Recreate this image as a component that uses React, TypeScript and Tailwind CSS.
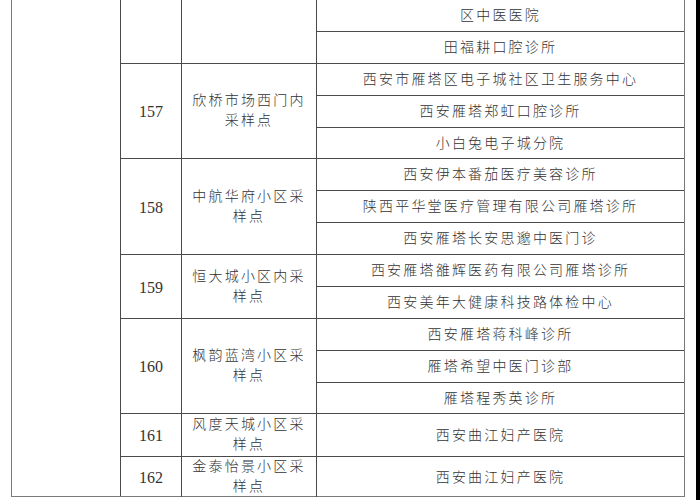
import React from "react";

type Group = { no: string; name: string; rows: string[]; h: string };

const groups: Group[] = [
  { no: "", name: "", rows: ["区中医医院", "田福耕口腔诊所"], h: "h-[64px]" },
  {
    no: "157",
    name: "欣桥市场西门内采样点",
    rows: ["西安市雁塔区电子城社区卫生服务中心", "西安雁塔郑虹口腔诊所", "小白兔电子城分院"],
    h: "h-[95px]",
  },
  {
    no: "158",
    name: "中航华府小区采样点",
    rows: ["西安伊本番茄医疗美容诊所", "陕西平华堂医疗管理有限公司雁塔诊所", "西安雁塔长安思邈中医门诊"],
    h: "h-[96px]",
  },
  {
    no: "159",
    name: "恒大城小区内采样点",
    rows: ["西安雁塔雒辉医药有限公司雁塔诊所", "西安美年大健康科技路体检中心"],
    h: "h-[64px]",
  },
  {
    no: "160",
    name: "枫韵蓝湾小区采样点",
    rows: ["西安雁塔蒋科峰诊所", "雁塔希望中医门诊部", "雁塔程秀英诊所"],
    h: "h-[95px]",
  },
  { no: "161", name: "风度天城小区采样点", rows: ["西安曲江妇产医院"], h: "h-[43px]" },
  { no: "162", name: "金泰怡景小区采样点", rows: ["西安曲江妇产医院"], h: "h-[40px]" },
];

export default function App() {
  return (
    <div
      className="w-[700px] h-[500px] bg-white flex overflow-hidden text-[#333333]"
      style={{ fontFamily: '"Liberation Serif", "Noto Sans CJK SC", serif' }}
    >
      <div className="w-[11px] shrink-0" />
      <div className="w-[674px] h-[497px] shrink-0 flex border-l border-r border-b border-[#7a7a7a]">
        <div className="w-[109px] shrink-0 border-r border-[#4a4a4a]" />
        <div className="flex-1 flex flex-col">
          {groups.map((g, gi) => (
            <div
              key={gi}
              className={`${g.h} shrink-0 flex ${gi < groups.length - 1 ? "border-b border-[#4a4a4a]" : ""}`}
            >
              <div className="w-[61px] shrink-0 border-r border-[#4a4a4a] flex items-center justify-center text-[16px] pt-[2px]">
                {g.no}
              </div>
              <div className="w-[135px] shrink-0 border-r border-[#4a4a4a] flex items-center justify-center px-[9px] text-center text-[14px] leading-[20px] tracking-[2.2px] font-light">
                {g.name}
              </div>
              <div className="flex-1 flex flex-col">
                {g.rows.map((r, ri) => (
                  <div
                    key={ri}
                    className={`flex items-center justify-center text-[14px] tracking-[2.2px] font-light ${
                      ri < g.rows.length - 1 ? "h-[32px] shrink-0 border-b border-[#4a4a4a]" : "flex-1"
                    }`}
                  >
                    {r}
                  </div>
                ))}
              </div>
            </div>
          ))}
        </div>
      </div>
      <div className="flex-1" />
      <div className="w-[4px] h-full bg-black shrink-0" />
    </div>
  );
}
